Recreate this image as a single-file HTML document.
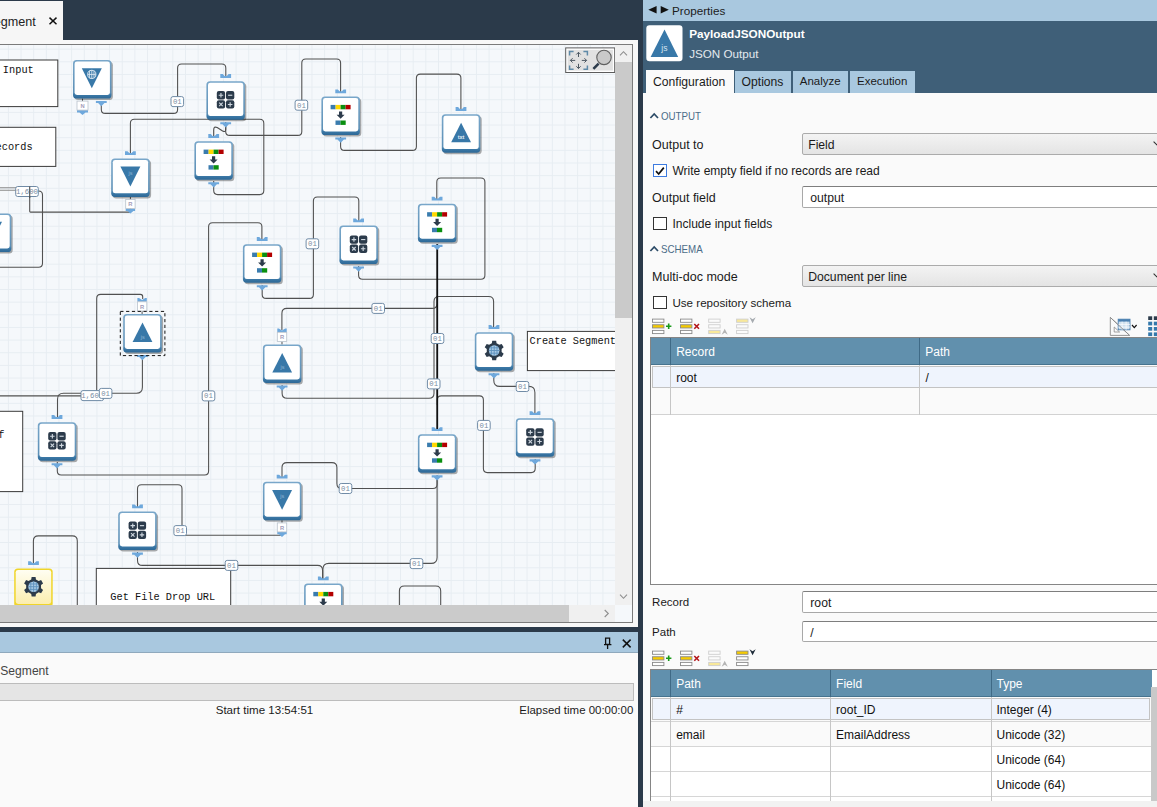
<!DOCTYPE html>
<html><head><meta charset="utf-8"><title>Properties</title>
<style>
*{box-sizing:border-box}
html,body{margin:0;padding:0}
body{width:1157px;height:807px;overflow:hidden;position:relative;background:#fafafa;font-family:"Liberation Sans",sans-serif;font-size:12px;color:#1a1a1a}
.abs{position:absolute}
.t{position:absolute;white-space:pre;line-height:1}
</style></head>
<body>
<!-- ===== left: top bar ===== -->
<div class="abs" style="left:0;top:0;width:643px;height:40px;background:#2b3a4a"></div>
<div class="abs" style="left:0;top:1px;width:63.2px;height:39px;background:#f6f6f6"></div>
<div class="t" style="left:-6.3px;top:15.8px;font-size:12.6px;color:#222">egment</div>
<svg class="abs" style="left:47px;top:15px" width="12" height="12" viewBox="0 0 12 12"><path d="M2.5,2.6 L9.5,9.2 M9.5,2.6 L2.5,9.2" stroke="#111" stroke-width="1.45" fill="none"/></svg>
<!-- light frame around canvas -->
<div class="abs" style="left:0;top:40px;width:637.5px;height:587.3px;background:#f8f8f8"></div>
<div class="abs" style="left:-1px;top:43.7px;width:634.1px;height:579px;border:1px solid #7b7b7b;background:#f5f8fb"></div>
<svg width="615.3" height="560" viewBox="0 45 615.3 560" style="position:absolute;left:0;top:45px;display:block">

<defs>
<pattern id="grid" x="7.9" y="10.7" width="12.65" height="12.65" patternUnits="userSpaceOnUse">
  <path d="M0.5,0 V12.65 M0,0.5 H12.65" stroke="#e7edf2" stroke-width="1" fill="none"/>
</pattern>
<linearGradient id="tb" x1="0" y1="0" x2="0" y2="1">
  <stop offset="0" stop-color="#79a7ca"/><stop offset="0.85" stop-color="#5b8fb6"/><stop offset="0.9" stop-color="#3d7aa8"/><stop offset="1" stop-color="#2d6896"/>
</linearGradient>
<linearGradient id="ty" x1="0" y1="0" x2="0" y2="1">
  <stop offset="0" stop-color="#fffef2"/><stop offset="1" stop-color="#fbeeb0"/>
</linearGradient>
<g id="tile">
  <rect x="1.6" y="1.8" width="38.3" height="38.2" rx="3.5" fill="#000" opacity="0.32"/>
  <rect x="0" y="0" width="38.5" height="38.5" rx="3.6" fill="url(#tb)"/>
  <rect x="1.6" y="1.5" width="35.3" height="33.4" rx="2.4" fill="#fff"/>
</g>
<g id="tileY">
  <rect x="0" y="0" width="38.5" height="38.5" rx="3.6" fill="#f0d52a"/>
  <rect x="1.5" y="1.5" width="35.5" height="34" rx="2.4" fill="url(#ty)"/>
</g>
<g id="icCalc">
  <g fill="#2c3b4b">
    <rect x="10.4" y="9.9" width="8.3" height="8.3" rx="2"/><rect x="19.6" y="9.9" width="8.3" height="8.3" rx="2"/>
    <rect x="10.4" y="19.1" width="8.3" height="8.3" rx="2"/><rect x="19.6" y="19.1" width="8.3" height="8.3" rx="2"/>
  </g>
  <g stroke="#cfd7df" stroke-width="1.15" fill="none">
    <path d="M12.3,14.05 H16.8 M14.55,11.8 V16.3"/>
    <path d="M21.7,14.05 H25.9"/>
    <path d="M12.8,21.5 L16.3,25 M16.3,21.5 L12.8,25"/>
    <path d="M21.5,23.25 H26 M23.75,21 V25.5"/>
  </g>
</g>
<g id="icBars">
  <rect x="9.2" y="8.4" width="5" height="4.4" fill="#3a7cae"/><rect x="14.2" y="8.4" width="5" height="4.4" fill="#ffd800"/>
  <rect x="19.2" y="8.4" width="5" height="4.4" fill="#0a8f10"/><rect x="24.2" y="8.4" width="5" height="4.4" fill="#b30000"/>
  <path d="M17.6,15 H20.8 V18.3 H23.2 L19.2,22.2 L15.2,18.3 H17.6 Z" fill="#2c3b4b"/>
  <rect x="14.1" y="24" width="5" height="4.4" fill="#3a7cae"/><rect x="19.1" y="24" width="5.2" height="4.4" fill="#0a8f10"/>
</g>
<g id="icJsUp">
  <path d="M19.3,8.5 L29.2,28 H9.4 Z" fill="#3878a8"/>
</g>
<g id="icTxtUp">
  <path d="M19.3,8.5 L29.2,28 H9.4 Z" fill="#3878a8"/>
</g>
<g id="icJsDown">
  <path d="M9.2,8.2 H29.2 L19.2,28 Z" fill="#3878a8"/>
</g>
<g id="icGlobeDown">
  <path d="M8.8,8.2 H28.8 L18.8,28.2 Z" fill="#3878a8"/>
  <circle cx="18.8" cy="14.4" r="4.1" fill="#3878a8" stroke="#dbe8f2" stroke-width="1"/>
  <path d="M18.8,10.3 V18.5 M14.7,14.4 H22.9 M16.6,10.9 V17.9 M21,10.9 V17.9" stroke="#dbe8f2" stroke-width="0.9" fill="none"/>
</g>
<g id="icGear">
  <path id="gearp" fill="#2c3b4b" d="M17.05,11.07 L17.42,8.50 L21.38,8.50 L21.75,11.07 L24.49,12.65 L26.90,11.69 L28.88,15.11 L26.83,16.72 L26.83,19.88 L28.88,21.49 L26.90,24.91 L24.49,23.95 L21.75,25.53 L21.38,28.10 L17.42,28.10 L17.05,25.53 L14.31,23.95 L11.90,24.91 L9.92,21.49 L11.97,19.88 L11.97,16.72 L9.92,15.11 L11.90,11.69 L14.31,12.65 Z"/>
  <circle cx="19.4" cy="18.3" r="5.3" fill="#a9cbe6"/>
  <path d="M19.4,13 V23.6 M14.1,18.3 H24.7 M16.6,13.8 V22.8 M22.2,13.8 V22.8 M14.8,15.6 H24 M14.8,21 H24" stroke="#5d92bd" stroke-width="0.9" fill="none"/>
</g>
</defs>

<rect x="0" y="45" width="615.3" height="560" fill="#f5f8fb"/>
<rect x="0" y="45" width="615.3" height="560" fill="url(#grid)"/>
<path d="M-5,187.7 H20 M-5,190.3 H20" stroke="#8a8a8a" stroke-width="1.1" fill="none"/><path d="M29.7,190.0 L29.7,211.3 Q29.7,212.1 30.5,212.1 L129.6,212.1 Q130.4,212.1 130.4,211.3 L130.4,208.0" fill="none" stroke="#515151" stroke-width="1.08"/><path d="M30.0,191.0 L38.5,191.0 Q42.5,191.0 42.5,195.0 L42.5,263.3 Q42.5,267.3 38.5,267.3 L-5.0,267.3" fill="none" stroke="#515151" stroke-width="1.08"/><path d="M101.3,102.0 L101.3,109.4 Q101.3,113.4 105.3,113.4 L173.6,113.4 Q177.6,113.4 177.6,109.4 L177.6,68.0 Q177.6,64.0 181.6,64.0 L221.8,64.0 Q225.8,64.0 225.8,68.0 L225.8,78.0" fill="none" stroke="#515151" stroke-width="1.08"/><path d="M225.7,122.0 L225.7,131.4 Q225.7,135.4 229.7,135.4 L297.8,135.4 Q301.8,135.4 301.8,131.4 L301.8,63.0 Q301.8,59.0 305.8,59.0 L336.6,59.0 Q340.6,59.0 340.6,63.0 L340.6,92.0" fill="none" stroke="#515151" stroke-width="1.08"/><path d="M225.7,124 V129.5 Q225.7,132.6 222.6,131 L217.2,127.6 Q213.7,125.8 213.7,130 V138" fill="none" stroke="#4f4f4f" stroke-width="1.15"/><path d="M213.7,181.0 L213.7,190.6 Q213.7,194.6 217.7,194.6 L259.8,194.6 Q263.8,194.6 263.8,190.6 L263.8,123.2 Q263.8,119.2 259.8,119.2 L134.4,119.2 Q130.4,119.2 130.4,123.2 L130.4,155.0" fill="none" stroke="#515151" stroke-width="1.08"/><path d="M340.6,137.0 L340.6,146.4 Q340.6,150.4 344.6,150.4 L412.4,150.4 Q416.4,150.4 416.4,146.4 L416.4,78.1 Q416.4,74.1 420.4,74.1 L456.9,74.1 Q460.9,74.1 460.9,78.1 L460.9,110.0" fill="none" stroke="#515151" stroke-width="1.08"/><path d="M57.3,462.0 L57.3,471.0 Q57.3,475.0 61.3,475.0 L204.6,475.0 Q208.6,475.0 208.6,471.0 L208.6,226.8 Q208.6,222.8 212.6,222.8 L257.9,222.8 Q261.9,222.8 261.9,226.8 L261.9,240.0" fill="none" stroke="#515151" stroke-width="1.08"/><path d="M262.2,285.0 L262.2,294.4 Q262.2,298.4 266.2,298.4 L309.4,298.4 Q313.4,298.4 313.4,294.4 L313.4,201.0 Q313.4,197.0 317.4,197.0 L354.8,197.0 Q358.8,197.0 358.8,201.0 L358.8,222.0" fill="none" stroke="#515151" stroke-width="1.08"/><path d="M358.6,266.0 L358.6,275.3 Q358.6,279.3 362.6,279.3 L480.9,279.3 Q484.9,279.3 484.9,275.3 L484.9,182.0 Q484.9,178.0 480.9,178.0 L440.8,178.0 Q436.8,178.0 436.8,182.0 L436.8,200.0" fill="none" stroke="#515151" stroke-width="1.08"/><path d="M282.1,385.0 L282.1,393.3 Q282.1,398.3 287.1,398.3 L429.0,398.3 Q434.0,398.3 434.0,393.3 L434.0,301.5 Q434.0,296.5 439.0,296.5 L488.6,296.5 Q493.6,296.5 493.6,301.5 L493.6,328.0" fill="none" stroke="#515151" stroke-width="1.08"/><path d="M437.1,296.0 L437.1,303.4 Q437.1,308.4 432.1,308.4 L286.9,308.4 Q281.9,308.4 281.9,313.4 L281.9,330.0" fill="none" stroke="#515151" stroke-width="1.08"/><path d="M535.2,459.0 L535.2,468.6 Q535.2,472.6 531.2,472.6 L487.4,472.6 Q483.4,472.6 483.4,468.6 L483.4,399.9 Q483.4,395.9 479.4,395.9 L441.3,395.9 Q437.3,395.9 437.3,399.9 L437.3,405.0" fill="none" stroke="#515151" stroke-width="1.08"/><path d="M437.2,244 V430" stroke="#111" stroke-width="1.8" fill="none"/><path d="M493.8,373.0 L493.8,380.4 Q493.8,386.4 499.8,386.4 L528.9,386.4 Q534.9,386.4 534.9,392.4 L534.9,414.0" fill="none" stroke="#515151" stroke-width="1.08"/><path d="M142.7,299.0 L142.7,296.7 Q142.7,294.4 140.4,294.4 L100.7,294.4 Q96.7,294.4 96.7,298.4 L96.7,391.9 Q96.7,395.9 92.7,395.9 L-5.0,395.9" fill="none" stroke="#515151" stroke-width="1.08"/><path d="M142.4,355.0 L142.4,387.3 Q142.4,393.3 136.4,393.3 L63.5,393.3 Q57.5,393.3 57.5,399.3 L57.5,418.0" fill="none" stroke="#515151" stroke-width="1.08"/><path d="M137.5,508.0 L137.5,488.7 Q137.5,484.7 141.5,484.7 L178.0,484.7 Q182.0,484.7 182.0,488.7 L182.0,531.3 Q182.0,535.3 186.0,535.3 L279.9,535.3 Q282.0,535.3 282.0,533.1 L282.0,531.0" fill="none" stroke="#515151" stroke-width="1.08"/><path d="M137.5,552.0 L137.5,560.4 Q137.5,565.4 142.5,565.4 L317.6,565.4 Q322.6,565.4 322.6,570.4 L322.6,580.0" fill="none" stroke="#515151" stroke-width="1.08"/><path d="M437.1,475.0 L437.1,557.4 Q437.1,563.4 431.1,563.4 L328.9,563.4 Q322.9,563.4 322.9,569.4 L322.9,580.0" fill="none" stroke="#515151" stroke-width="1.08"/><path d="M437.1,480.0 L437.1,484.2 Q437.1,488.5 432.9,488.5 L341.9,488.5 Q336.9,488.5 336.9,483.5 L336.9,467.6 Q336.9,462.6 331.9,462.6 L287.0,462.6 Q282.0,462.6 282.0,467.6 L282.0,478.0" fill="none" stroke="#515151" stroke-width="1.08"/><path d="M33.4,565.0 L33.4,540.9 Q33.4,535.9 38.4,535.9 L72.3,535.9 Q77.3,535.9 77.3,540.9 L77.3,612.0" fill="none" stroke="#515151" stroke-width="1.08"/><path d="M399.4,612.0 L399.4,591.0 Q399.4,586.0 404.4,586.0 L435.7,586.0 Q440.7,586.0 440.7,591.0 L440.7,612.0" fill="none" stroke="#515151" stroke-width="1.08"/><rect x="-10" y="60" width="67.8" height="46.6" fill="#fff" stroke="#3a3a3a" stroke-width="1"/><text x="-3.3" y="72.8" font-family="Liberation Mono, monospace" font-size="10.3" fill="#111" xml:space="preserve"> Input</text><rect x="-10" y="127.3" width="65.8" height="39.1" fill="#fff" stroke="#3a3a3a" stroke-width="1"/><text x="-10.6" y="150.4" font-family="Liberation Mono, monospace" font-size="10.3" fill="#111" xml:space="preserve">records</text><rect x="-10" y="411.3" width="32.7" height="80.3" fill="#fff" stroke="#3a3a3a" stroke-width="1"/><text x="-1.7" y="437.6" font-family="Liberation Mono, monospace" font-size="10.3" fill="#111" xml:space="preserve">f</text><rect x="527.4" y="331.4" width="100" height="39.2" fill="#fff" stroke="#3a3a3a" stroke-width="1"/><text x="529.6" y="343.6" font-family="Liberation Mono, monospace" font-size="10.3" fill="#111" xml:space="preserve">Create Segment</text><rect x="96.3" y="568.4" width="134.4" height="60" fill="#fff" stroke="#3a3a3a" stroke-width="1"/><text x="110.3" y="600" font-family="Liberation Mono, monospace" font-size="10.3" fill="#111" xml:space="preserve">Get File Drop URL</text><path d="M95.9,101.0 H106.7 V103.1 H104.5 L101.3,106.2 L98.1,103.1 H95.9 Z" fill="#6ea8dc"/><path d="M220.3,74.1 L222.8,74.1 L224.6,75.9 L226.8,75.9 L228.6,74.1 L231.1,74.1 L231.1,77.9 L220.3,77.9 Z" fill="#6ea8dc"/><path d="M220.3,122.2 H231.1 V124.3 H228.9 L225.7,127.4 L222.5,124.3 H220.3 Z" fill="#6ea8dc"/><path d="M125.0,151.3 L127.5,151.3 L129.3,153.1 L131.5,153.1 L133.3,151.3 L135.8,151.3 L135.8,155.1 L125.0,155.1 Z" fill="#6ea8dc"/><path d="M208.3,134.1 L210.8,134.1 L212.6,135.9 L214.8,135.9 L216.6,134.1 L219.1,134.1 L219.1,137.9 L208.3,137.9 Z" fill="#6ea8dc"/><path d="M208.3,182.2 H219.1 V184.3 H216.9 L213.7,187.4 L210.5,184.3 H208.3 Z" fill="#6ea8dc"/><path d="M335.3,89.4 L337.8,89.4 L339.6,91.2 L341.8,91.2 L343.6,89.4 L346.1,89.4 L346.1,93.2 L335.3,93.2 Z" fill="#6ea8dc"/><path d="M335.3,137.5 H346.1 V139.6 H343.9 L340.7,142.7 L337.5,139.6 H335.3 Z" fill="#6ea8dc"/><path d="M455.6,107.1 L458.1,107.1 L459.9,108.9 L462.1,108.9 L463.9,107.1 L466.4,107.1 L466.4,110.9 L455.6,110.9 Z" fill="#6ea8dc"/><path d="M256.8,237.1 L259.3,237.1 L261.1,238.9 L263.3,238.9 L265.1,237.1 L267.6,237.1 L267.6,240.9 L256.8,240.9 Z" fill="#6ea8dc"/><path d="M256.8,285.2 H267.6 V287.3 H265.4 L262.2,290.4 L259.0,287.3 H256.8 Z" fill="#6ea8dc"/><path d="M353.2,218.4 L355.7,218.4 L357.5,220.2 L359.7,220.2 L361.5,218.4 L364.0,218.4 L364.0,222.2 L353.2,222.2 Z" fill="#6ea8dc"/><path d="M353.2,266.5 H364.0 V268.6 H361.8 L358.6,271.7 L355.4,268.6 H353.2 Z" fill="#6ea8dc"/><path d="M431.7,196.7 L434.2,196.7 L436.0,198.5 L438.2,198.5 L440.0,196.7 L442.5,196.7 L442.5,200.5 L431.7,200.5 Z" fill="#6ea8dc"/><path d="M431.7,244.8 H442.5 V246.9 H440.3 L437.1,250.0 L433.9,246.9 H431.7 Z" fill="#6ea8dc"/><path d="M137.0,355.0 H147.8 V357.1 H145.6 L142.4,360.2 L139.2,357.1 H137.0 Z" fill="#6ea8dc"/><path d="M276.7,385.5 H287.5 V387.6 H285.3 L282.1,390.7 L278.9,387.6 H276.7 Z" fill="#6ea8dc"/><path d="M488.6,325.1 L491.1,325.1 L492.9,326.9 L495.1,326.9 L496.9,325.1 L499.4,325.1 L499.4,328.9 L488.6,328.9 Z" fill="#6ea8dc"/><path d="M488.6,373.2 H499.4 V375.3 H497.2 L494.0,378.4 L490.8,375.3 H488.6 Z" fill="#6ea8dc"/><path d="M51.6,415.1 L54.1,415.1 L55.9,416.9 L58.1,416.9 L59.9,415.1 L62.4,415.1 L62.4,418.9 L51.6,418.9 Z" fill="#6ea8dc"/><path d="M51.6,463.2 H62.4 V465.3 H60.2 L57.0,468.4 L53.8,465.3 H51.6 Z" fill="#6ea8dc"/><path d="M529.6,411.2 L532.1,411.2 L533.9,413.0 L536.1,413.0 L537.9,411.2 L540.4,411.2 L540.4,415.0 L529.6,415.0 Z" fill="#6ea8dc"/><path d="M529.6,459.3 H540.4 V461.4 H538.2 L535.0,464.5 L531.8,461.4 H529.6 Z" fill="#6ea8dc"/><path d="M431.7,427.2 L434.2,427.2 L436.0,429.0 L438.2,429.0 L440.0,427.2 L442.5,427.2 L442.5,431.0 L431.7,431.0 Z" fill="#6ea8dc"/><path d="M431.7,475.3 H442.5 V477.4 H440.3 L437.1,480.5 L433.9,477.4 H431.7 Z" fill="#6ea8dc"/><path d="M276.7,474.7 L279.2,474.7 L281.0,476.5 L283.2,476.5 L285.0,474.7 L287.5,474.7 L287.5,478.5 L276.7,478.5 Z" fill="#6ea8dc"/><path d="M132.1,504.5 L134.6,504.5 L136.4,506.3 L138.6,506.3 L140.4,504.5 L142.9,504.5 L142.9,508.3 L132.1,508.3 Z" fill="#6ea8dc"/><path d="M132.1,552.6 H142.9 V554.7 H140.7 L137.5,557.8 L134.3,554.7 H132.1 Z" fill="#6ea8dc"/><path d="M317.9,576.4 L320.4,576.4 L322.2,578.2 L324.4,578.2 L326.2,576.4 L328.7,576.4 L328.7,580.2 L317.9,580.2 Z" fill="#6ea8dc"/><line x1="82.5" y1="98.5" x2="82.5" y2="101.1" stroke="#555" stroke-width="1"/><path d="M77.0,110.1 H88.0 V112.5 H85.5 L82.5,115.1 L79.5,112.5 H77.0 Z" fill="#6ea8dc"/><rect x="77.0" y="101.1" width="11.0" height="9.0" fill="#fff" stroke="#b9c2cc" stroke-width="0.8"/><text x="82.5" y="107.8" text-anchor="middle" font-family="Liberation Sans, sans-serif" font-size="5.8" font-weight="bold" fill="#a39dba">N</text><line x1="130.4" y1="196.9" x2="130.4" y2="199.5" stroke="#555" stroke-width="1"/><path d="M125.7,208.5 H135.1 V210.9 H133.4 L130.4,213.5 L127.4,210.9 H125.7 Z" fill="#6ea8dc"/><rect x="125.7" y="199.5" width="9.4" height="9.0" fill="#fff" stroke="#b9c2cc" stroke-width="0.8"/><text x="130.4" y="206.2" text-anchor="middle" font-family="Liberation Sans, sans-serif" font-size="5.8" font-weight="bold" fill="#a39dba">R</text><line x1="142.1" y1="311.0" x2="142.1" y2="314.0" stroke="#555" stroke-width="1"/><path d="M137.4,297.9 L139.0,297.9 L142.1,300.1 L145.2,297.9 L146.8,297.9 L146.8,301.8 L137.4,301.8 Z" fill="#6ea8dc"/><rect x="137.4" y="301.8" width="9.4" height="9.2" fill="#fff" stroke="#b9c2cc" stroke-width="0.8"/><text x="142.1" y="308.7" text-anchor="middle" font-family="Liberation Sans, sans-serif" font-size="5.8" font-weight="bold" fill="#a39dba">R</text><line x1="282.0" y1="341.5" x2="282.0" y2="344.5" stroke="#555" stroke-width="1"/><path d="M277.3,328.4 L278.9,328.4 L282.0,330.6 L285.1,328.4 L286.7,328.4 L286.7,332.3 L277.3,332.3 Z" fill="#6ea8dc"/><rect x="277.3" y="332.3" width="9.4" height="9.2" fill="#fff" stroke="#b9c2cc" stroke-width="0.8"/><text x="282.0" y="339.2" text-anchor="middle" font-family="Liberation Sans, sans-serif" font-size="5.8" font-weight="bold" fill="#a39dba">R</text><line x1="282.0" y1="520.3" x2="282.0" y2="522.9" stroke="#555" stroke-width="1"/><path d="M277.3,531.9 H286.7 V534.3 H285.0 L282.0,536.9 L279.0,534.3 H277.3 Z" fill="#6ea8dc"/><rect x="277.3" y="522.9" width="9.4" height="9.0" fill="#fff" stroke="#b9c2cc" stroke-width="0.8"/><text x="282.0" y="529.6" text-anchor="middle" font-family="Liberation Sans, sans-serif" font-size="5.8" font-weight="bold" fill="#a39dba">R</text><rect x="120.3" y="311.4" width="44.6" height="44.2" fill="none" stroke="#111" stroke-width="1" stroke-dasharray="3.2 2.6"/><use href="#tile" x="73.0" y="60.0"/><use href="#icGlobeDown" x="73.0" y="60.0"/><use href="#tile" x="206.4" y="81.2"/><use href="#icCalc" x="206.4" y="81.2"/><use href="#tile" x="111.2" y="158.4"/><use href="#icJsDown" x="111.2" y="158.4"/><text x="130.6" y="175.0" text-anchor="middle" font-family="Liberation Sans, sans-serif" font-size="5.5" fill="#8fb6d6">js</text><use href="#tile" x="194.4" y="141.2"/><use href="#icBars" x="194.4" y="141.2"/><use href="#tile" x="321.4" y="96.5"/><use href="#icBars" x="321.4" y="96.5"/><use href="#tile" x="441.8" y="114.2"/><use href="#icTxtUp" x="441.8" y="114.2"/><text x="461.1" y="138.8" text-anchor="middle" font-family="Liberation Sans, sans-serif" font-size="5.5" font-weight="bold" fill="#e4eef6">txt</text><use href="#tile" x="-27.2" y="213.5"/><use href="#icJsDown" x="-27.2" y="213.5"/><text x="-7.9" y="230.1" text-anchor="middle" font-family="Liberation Sans, sans-serif" font-size="5.5" fill="#8fb6d6">js</text><use href="#tile" x="242.9" y="244.2"/><use href="#icBars" x="242.9" y="244.2"/><use href="#tile" x="339.4" y="225.5"/><use href="#icCalc" x="339.4" y="225.5"/><use href="#tile" x="417.9" y="203.8"/><use href="#icBars" x="417.9" y="203.8"/><use href="#tile" x="123.2" y="314.0"/><use href="#icJsUp" x="123.2" y="314.0"/><text x="142.8" y="339.0" text-anchor="middle" font-family="Liberation Sans, sans-serif" font-size="5.5" fill="#8fb6d6">js</text><use href="#tile" x="262.9" y="344.5"/><use href="#icJsUp" x="262.9" y="344.5"/><text x="282.5" y="369.5" text-anchor="middle" font-family="Liberation Sans, sans-serif" font-size="5.5" fill="#8fb6d6">js</text><use href="#tile" x="474.8" y="332.2"/><use href="#icGear" x="474.8" y="332.2"/><use href="#tile" x="37.8" y="422.2"/><use href="#icCalc" x="37.8" y="422.2"/><use href="#tile" x="515.8" y="418.3"/><use href="#icCalc" x="515.8" y="418.3"/><use href="#tile" x="417.9" y="434.3"/><use href="#icBars" x="417.9" y="434.3"/><use href="#tile" x="262.9" y="481.8"/><use href="#icJsDown" x="262.9" y="481.8"/><text x="282.2" y="498.4" text-anchor="middle" font-family="Liberation Sans, sans-serif" font-size="5.5" fill="#8fb6d6">js</text><use href="#tile" x="118.2" y="511.6"/><use href="#icCalc" x="118.2" y="511.6"/><use href="#tile" x="304.1" y="583.5"/><use href="#icBars" x="304.1" y="583.5"/><path d="M28.1,561.3 L30.6,561.3 L32.4,563.1 L34.6,563.1 L36.4,561.3 L38.9,561.3 L38.9,565.1 L28.1,565.1 Z" fill="#6ea8dc"/><use href="#tileY" x="14.2" y="568.4"/><use href="#icGear" x="14.2" y="568.4"/><rect x="171.0" y="96.6" width="12.6" height="10" rx="2" fill="#fff" stroke="#6f8ba6" stroke-width="1"/><text x="177.3" y="104.2" text-anchor="middle" font-family="Liberation Mono, monospace" font-size="7.3" fill="#7a8da3">01</text><rect x="295.1" y="100.2" width="12.6" height="10" rx="2" fill="#fff" stroke="#6f8ba6" stroke-width="1"/><text x="301.4" y="107.8" text-anchor="middle" font-family="Liberation Mono, monospace" font-size="7.3" fill="#7a8da3">01</text><rect x="306.1" y="238.8" width="12.6" height="10" rx="2" fill="#fff" stroke="#6f8ba6" stroke-width="1"/><text x="312.4" y="246.4" text-anchor="middle" font-family="Liberation Mono, monospace" font-size="7.3" fill="#7a8da3">01</text><rect x="371.9" y="303.4" width="12.6" height="10" rx="2" fill="#fff" stroke="#6f8ba6" stroke-width="1"/><text x="378.2" y="311.0" text-anchor="middle" font-family="Liberation Mono, monospace" font-size="7.3" fill="#7a8da3">01</text><rect x="431.2" y="333.5" width="12.6" height="10" rx="2" fill="#fff" stroke="#6f8ba6" stroke-width="1"/><text x="437.5" y="341.1" text-anchor="middle" font-family="Liberation Mono, monospace" font-size="7.3" fill="#7a8da3">01</text><rect x="427.4" y="378.9" width="12.6" height="10" rx="2" fill="#fff" stroke="#6f8ba6" stroke-width="1"/><text x="433.7" y="386.5" text-anchor="middle" font-family="Liberation Mono, monospace" font-size="7.3" fill="#7a8da3">01</text><rect x="516.2" y="381.5" width="12.6" height="10" rx="2" fill="#fff" stroke="#6f8ba6" stroke-width="1"/><text x="522.5" y="389.1" text-anchor="middle" font-family="Liberation Mono, monospace" font-size="7.3" fill="#7a8da3">01</text><rect x="477.6" y="420.4" width="12.6" height="10" rx="2" fill="#fff" stroke="#6f8ba6" stroke-width="1"/><text x="483.9" y="428.0" text-anchor="middle" font-family="Liberation Mono, monospace" font-size="7.3" fill="#7a8da3">01</text><rect x="202.2" y="390.9" width="12.6" height="10" rx="2" fill="#fff" stroke="#6f8ba6" stroke-width="1"/><text x="208.5" y="398.5" text-anchor="middle" font-family="Liberation Mono, monospace" font-size="7.3" fill="#7a8da3">01</text><rect x="173.9" y="525.6" width="12.6" height="10" rx="2" fill="#fff" stroke="#6f8ba6" stroke-width="1"/><text x="180.2" y="533.2" text-anchor="middle" font-family="Liberation Mono, monospace" font-size="7.3" fill="#7a8da3">01</text><rect x="225.2" y="560.4" width="12.6" height="10" rx="2" fill="#fff" stroke="#6f8ba6" stroke-width="1"/><text x="231.5" y="568.0" text-anchor="middle" font-family="Liberation Mono, monospace" font-size="7.3" fill="#7a8da3">01</text><rect x="339.2" y="483.5" width="12.6" height="10" rx="2" fill="#fff" stroke="#6f8ba6" stroke-width="1"/><text x="345.5" y="491.1" text-anchor="middle" font-family="Liberation Mono, monospace" font-size="7.3" fill="#7a8da3">01</text><rect x="410.2" y="558.6" width="12.6" height="10" rx="2" fill="#fff" stroke="#6f8ba6" stroke-width="1"/><text x="416.5" y="566.2" text-anchor="middle" font-family="Liberation Mono, monospace" font-size="7.3" fill="#7a8da3">01</text><rect x="15.7" y="186.5" width="22.6" height="10" rx="2" fill="#fff" stroke="#6f8ba6" stroke-width="1"/><text x="27.0" y="194.1" text-anchor="middle" font-family="Liberation Mono, monospace" font-size="7.3" fill="#7a8da3">1,600</text><rect x="81.0" y="390.6" width="22.6" height="10" rx="2" fill="#fff" stroke="#6f8ba6" stroke-width="1"/><text x="92.3" y="398.2" text-anchor="middle" font-family="Liberation Mono, monospace" font-size="7.3" fill="#7a8da3">1,600</text><rect x="99.3" y="388.4" width="12.6" height="10" rx="2" fill="#fff" stroke="#6f8ba6" stroke-width="1"/><text x="105.6" y="396.0" text-anchor="middle" font-family="Liberation Mono, monospace" font-size="7.3" fill="#7a8da3">01</text><path d="M29.7,186.6 V198" stroke="#4f4f4f" stroke-width="1.15" fill="none"/>
<!-- fit / zoom toolbox -->
<rect x="565.7" y="47.9" width="49" height="24.6" fill="#fff" stroke="#5c5c5c" stroke-width="1"/>
<rect x="567.6" y="49.8" width="45.3" height="20.8" fill="#e1e1e1"/>
<g fill="none" stroke="#5f8aa8" stroke-width="1.5">
  <path d="M569.6,55.4 V51.5 H573.6 M583.4,51.5 H587.4 V55.4 M587.4,65.4 V69.3 H583.4 M573.6,69.3 H569.6 V65.4"/>
</g>
<g fill="none" stroke="#4a5560" stroke-width="1">
  <path d="M578.5,57 V52.3 M576.3,54.5 L578.5,52.3 L580.7,54.5"/>
  <path d="M578.5,63.8 V68.5 M576.3,66.3 L578.5,68.5 L580.7,66.3"/>
  <path d="M575.2,60.4 H570.4 M572.6,58.2 L570.4,60.4 L572.6,62.6"/>
  <path d="M581.8,60.4 H586.6 M584.4,58.2 L586.6,60.4 L584.4,62.6"/>
</g>
<circle cx="604" cy="57.4" r="7.2" fill="#c9c9c9" stroke="#5f5f5f" stroke-width="1.1"/>
<path d="M598.6,63.6 L593.4,68.8" stroke="#2c3b4b" stroke-width="2.6" fill="none"/>
</svg>
<!-- vertical scrollbar -->
<div class="abs" style="left:615.3px;top:44.7px;width:16.9px;height:560.3px;background:#f0f0f0"></div>
<div class="abs" style="left:615.3px;top:61.8px;width:16.9px;height:256.2px;background:#cacaca"></div>
<svg class="abs" style="left:615.3px;top:44.7px" width="17" height="17" viewBox="0 0 17 17"><path d="M5,10.3 L8.5,6.7 L12,10.3" stroke="#8e8e8e" stroke-width="1.1" fill="none"/></svg>
<svg class="abs" style="left:615.3px;top:588px" width="17" height="17" viewBox="0 0 17 17"><path d="M5,6.7 L8.5,10.3 L12,6.7" stroke="#8e8e8e" stroke-width="1.1" fill="none"/></svg>
<!-- horizontal scrollbar -->
<div class="abs" style="left:0;top:605px;width:615.3px;height:17px;background:#f0f0f0"></div>
<div class="abs" style="left:0;top:605px;width:569.2px;height:17px;background:#cbcbcb"></div>
<svg class="abs" style="left:598px;top:605px" width="17" height="17" viewBox="0 0 17 17"><path d="M6.7,5 L10.3,8.5 L6.7,12" stroke="#8e8e8e" stroke-width="1.1" fill="none"/></svg>
<div class="abs" style="left:615.3px;top:605px;width:16.9px;height:17px;background:#f5f8fb"></div>
<!-- splitters -->
<div class="abs" style="left:0;top:627.3px;width:643px;height:5px;background:#2b3a4a"></div>
<div class="abs" style="left:637.5px;top:0;width:5.3px;height:807px;background:#2b3a4a"></div>
<!-- ===== bottom-left panel ===== -->
<div class="abs" style="left:0;top:632.3px;width:637.5px;height:21px;background:#a9c8df;border-bottom:1px solid #8fa9bd"></div>
<div class="abs" style="left:0;top:653.3px;width:637.5px;height:153.7px;background:#fafafa"></div>
<svg class="abs" style="left:601px;top:637px" width="34" height="14" viewBox="0 0 34 14">
  <path d="M4.6,1.2 H8.6 V7.4 H4.6 Z M3,7.6 H10.4 M6.6,7.6 V12" stroke="#111" stroke-width="1.3" fill="none"/>
  <path d="M21.8,2.6 L29.6,10.4 M29.6,2.6 L21.8,10.4" stroke="#111" stroke-width="1.5" fill="none"/>
</svg>
<div class="t" style="left:0.3px;top:665.3px;font-size:12.1px;color:#444">Segment</div>
<div class="abs" style="left:-1px;top:683px;width:635px;height:17.5px;background:#e5e5e5;border:1px solid #bcbcbc"></div>
<div class="t" style="left:215.7px;top:704.6px;font-size:11.55px;color:#1a1a1a">Start time 13:54:51</div>
<div class="t" style="left:519.3px;top:704.6px;font-size:11.46px;color:#1a1a1a">Elapsed time 00:00:00</div>
<div class="abs" style="left:642.8px;top:0;width:514.2px;height:807px;background:#fafafa"></div>
<div class="abs" style="left:642.8px;top:0;width:514.2px;height:20.6px;background:#a9c8df"></div>
<div class="abs" style="left:642.8px;top:20.6px;width:514.2px;height:72.2px;background:#3f5f78"></div>
<svg class="abs" style="left:646px;top:4px" width="26" height="12" viewBox="0 0 26 12"><path d="M2.3,5.7 L10.6,1.9 V9.5 Z M22.8,5.7 L14.7,1.9 V9.5 Z" fill="#111"/></svg>
<div class="t" style="left:672px;top:4.6px;font-size:11.7px;color:#1c1c1c">Properties</div>
<svg class="abs" style="left:646.4px;top:24.6px" width="37" height="37" viewBox="0 0 37 37"><rect x="0.3" y="0.3" width="36.2" height="35.9" rx="3.2" fill="#fff"/><path d="M18.5,4.6 L32.2,32 H4.6 Z" fill="#3878a8"/><text x="18.4" y="25.6" text-anchor="middle" font-family="Liberation Sans, sans-serif" font-size="8.6" fill="#d6e4ef">js</text></svg>
<div class="t" style="left:689.2px;top:27.8px;font-size:11.74px;font-weight:700;color:#fff">PayloadJSONOutput</div>
<div class="t" style="left:689.2px;top:47.6px;font-size:11.65px;color:#e3e9ee">JSON Output</div>
<div class="abs" style="left:646px;top:69.9px;width:87.6px;height:23px;background:#fafafa"></div>
<div class="t" style="left:653px;top:75.6px;font-size:12.15px;color:#1a1a1a">Configuration</div>
<div class="abs" style="left:734.9px;top:71.4px;width:56.4px;height:21.4px;background:#a9c8df"></div>
<div class="t" style="left:741.6px;top:75.8px;font-size:12.13px;color:#1a1a1a">Options</div>
<div class="abs" style="left:792.7px;top:71.4px;width:55.6px;height:21.4px;background:#a9c8df"></div>
<div class="t" style="left:799.8px;top:75.8px;font-size:11.47px;color:#1a1a1a">Analyze</div>
<div class="abs" style="left:850.1px;top:71.4px;width:65.0px;height:21.4px;background:#a9c8df"></div>
<div class="t" style="left:857px;top:75.8px;font-size:11.48px;color:#1a1a1a">Execution</div>
<svg class="abs" style="left:649px;top:111.3px" width="11" height="10" viewBox="0 0 11 10"><path d="M1.4,7 L5.2,3 L9,7" stroke="#2b4a66" stroke-width="1.7" fill="none"/></svg>
<div class="t" style="left:661px;top:110.7px;font-size:10.9px;color:#4b6c88;transform:scaleX(0.895);transform-origin:0 0">OUTPUT</div>
<svg class="abs" style="left:649px;top:244.3px" width="11" height="10" viewBox="0 0 11 10"><path d="M1.4,7 L5.2,3 L9,7" stroke="#2b4a66" stroke-width="1.7" fill="none"/></svg>
<div class="t" style="left:661px;top:243.70000000000002px;font-size:10.9px;color:#4b6c88;transform:scaleX(0.895);transform-origin:0 0">SCHEMA</div>
<div class="t" style="left:652.1px;top:139.0px;font-size:12.5px;color:#1a1a1a">Output to</div>
<div class="t" style="left:672.4px;top:165.0px;font-size:12.05px;color:#1a1a1a">Write empty field if no records are read</div>
<div class="t" style="left:652.1px;top:191.7px;font-size:12.44px;color:#1a1a1a">Output field</div>
<div class="t" style="left:672.4px;top:218.2px;font-size:12.07px;color:#1a1a1a">Include input fields</div>
<div class="t" style="left:652.1px;top:270.7px;font-size:12.54px;color:#1a1a1a">Multi-doc mode</div>
<div class="t" style="left:672.4px;top:297.3px;font-size:11.61px;color:#1a1a1a">Use repository schema</div>
<div class="t" style="left:652.1px;top:597.4px;font-size:11.5px;color:#1a1a1a">Record</div>
<div class="t" style="left:652.1px;top:626.7px;font-size:11.5px;color:#1a1a1a">Path</div>
<div class="abs" style="left:802.3px;top:133.2px;width:370px;height:21.7px;border:1px solid #ababab;border-radius:2px;background:linear-gradient(#f3f3f3,#e4e4e4)"></div>
<div class="t" style="left:808.2px;top:139.1px;font-size:12.2px;color:#1a1a1a">Field</div>
<svg class="abs" style="left:1150px;top:139.2px" width="8" height="8" viewBox="0 0 8 8"><path d="M3.6,2.6 L6.8,5.8 L10,2.6" stroke="#333" stroke-width="1.1" fill="none"/></svg>
<div class="abs" style="left:802.3px;top:264.9px;width:370px;height:21.7px;border:1px solid #ababab;border-radius:2px;background:linear-gradient(#f3f3f3,#e4e4e4)"></div>
<div class="t" style="left:808.2px;top:270.79999999999995px;font-size:12.2px;color:#1a1a1a">Document per line</div>
<svg class="abs" style="left:1150px;top:270.9px" width="8" height="8" viewBox="0 0 8 8"><path d="M3.6,2.6 L6.8,5.8 L10,2.6" stroke="#333" stroke-width="1.1" fill="none"/></svg>
<div class="abs" style="left:802.3px;top:186.0px;width:370px;height:21.9px;border:1px solid #a8a8a8;border-top-color:#7e7e7e;border-radius:2px;background:#fff"></div>
<div class="t" style="left:810.3px;top:192.1px;font-size:12.2px;color:#1a1a1a">output</div>
<div class="abs" style="left:802.3px;top:591.0px;width:370px;height:21.9px;border:1px solid #a8a8a8;border-top-color:#7e7e7e;border-radius:2px;background:#fff"></div>
<div class="t" style="left:810.3px;top:597.1px;font-size:12.2px;color:#1a1a1a">root</div>
<div class="abs" style="left:802.3px;top:620.9px;width:370px;height:20.8px;border:1px solid #a8a8a8;border-top-color:#7e7e7e;border-radius:2px;background:#fff"></div>
<div class="t" style="left:810.3px;top:627.0px;font-size:12.2px;color:#1a1a1a">/</div>
<div class="abs" style="left:653.2px;top:164px;width:13.4px;height:13.4px;border:1px solid #3d7be0;background:#fff"></div>
<svg class="abs" style="left:653.2px;top:164px" width="14" height="14" viewBox="0 0 14 14"><path d="M3,7.2 L5.7,10 L10.8,3.6" stroke="#111" stroke-width="1.7" fill="none"/></svg>
<div class="abs" style="left:653.2px;top:217.3px;width:13.4px;height:13.1px;border:1px solid #333;background:#fff"></div>
<div class="abs" style="left:653.2px;top:296.4px;width:13.4px;height:13.1px;border:1px solid #333;background:#fff"></div>
<svg class="abs" style="left:0;top:0" width="1157" height="807" viewBox="0 0 1157 807"><g transform="translate(652,318.6)"><rect x="0.5" y="0.50" width="11.4" height="3.2" fill="#fff" stroke="#8a8a8a" stroke-width="0.9"/><rect x="0.5" y="6.15" width="11.4" height="3.2" fill="#f6cb00" stroke="#8a8a8a" stroke-width="0.9"/><rect x="0.5" y="11.80" width="11.4" height="3.2" fill="#fff" stroke="#8a8a8a" stroke-width="0.9"/><path d="M14,7.7 H19.4 M16.7,5 V10.4" stroke="#1a9a1a" stroke-width="1.6" fill="none"/></g><g transform="translate(680,318.6)"><rect x="0.5" y="0.50" width="11.4" height="3.2" fill="#fff" stroke="#8a8a8a" stroke-width="0.9"/><rect x="0.5" y="6.15" width="11.4" height="3.2" fill="#f6cb00" stroke="#8a8a8a" stroke-width="0.9"/><rect x="0.5" y="11.80" width="11.4" height="3.2" fill="#fff" stroke="#8a8a8a" stroke-width="0.9"/><path d="M14.3,5.4 L19,10.1 M19,5.4 L14.3,10.1" stroke="#b4161b" stroke-width="1.6" fill="none"/></g><g transform="translate(708.2,318.6)" opacity="0.38"><rect x="0.5" y="0.50" width="11.4" height="3.2" fill="#fff" stroke="#8a8a8a" stroke-width="0.9"/><rect x="0.5" y="6.15" width="11.4" height="3.2" fill="#fff" stroke="#8a8a8a" stroke-width="0.9"/><rect x="0.5" y="11.80" width="11.4" height="3.2" fill="#f6cb00" stroke="#8a8a8a" stroke-width="0.9"/><path d="M13.4,16.2 L16.5,10.2 L19.6,16.2 L16.5,14.2 Z" fill="#444"/></g><g transform="translate(736.1,318.6)" opacity="0.38"><rect x="0.5" y="0.50" width="11.4" height="3.2" fill="#f6cb00" stroke="#8a8a8a" stroke-width="0.9"/><rect x="0.5" y="6.15" width="11.4" height="3.2" fill="#fff" stroke="#8a8a8a" stroke-width="0.9"/><rect x="0.5" y="11.80" width="11.4" height="3.2" fill="#fff" stroke="#8a8a8a" stroke-width="0.9"/><path d="M13.4,-1.4 L16.5,4.6 L19.6,-1.4 L16.5,0.6 Z" fill="#1f2c3a"/></g><g transform="translate(652,650.6)"><rect x="0.5" y="0.50" width="11.4" height="3.2" fill="#fff" stroke="#8a8a8a" stroke-width="0.9"/><rect x="0.5" y="6.15" width="11.4" height="3.2" fill="#f6cb00" stroke="#8a8a8a" stroke-width="0.9"/><rect x="0.5" y="11.80" width="11.4" height="3.2" fill="#fff" stroke="#8a8a8a" stroke-width="0.9"/><path d="M14,7.7 H19.4 M16.7,5 V10.4" stroke="#1a9a1a" stroke-width="1.6" fill="none"/></g><g transform="translate(680,650.6)"><rect x="0.5" y="0.50" width="11.4" height="3.2" fill="#fff" stroke="#8a8a8a" stroke-width="0.9"/><rect x="0.5" y="6.15" width="11.4" height="3.2" fill="#f6cb00" stroke="#8a8a8a" stroke-width="0.9"/><rect x="0.5" y="11.80" width="11.4" height="3.2" fill="#fff" stroke="#8a8a8a" stroke-width="0.9"/><path d="M14.3,5.4 L19,10.1 M19,5.4 L14.3,10.1" stroke="#b4161b" stroke-width="1.6" fill="none"/></g><g transform="translate(708.2,650.6)" opacity="0.38"><rect x="0.5" y="0.50" width="11.4" height="3.2" fill="#fff" stroke="#8a8a8a" stroke-width="0.9"/><rect x="0.5" y="6.15" width="11.4" height="3.2" fill="#fff" stroke="#8a8a8a" stroke-width="0.9"/><rect x="0.5" y="11.80" width="11.4" height="3.2" fill="#f6cb00" stroke="#8a8a8a" stroke-width="0.9"/><path d="M13.4,16.2 L16.5,10.2 L19.6,16.2 L16.5,14.2 Z" fill="#444"/></g><g transform="translate(736.1,650.6)"><rect x="0.5" y="0.50" width="11.4" height="3.2" fill="#f6cb00" stroke="#8a8a8a" stroke-width="0.9"/><rect x="0.5" y="6.15" width="11.4" height="3.2" fill="#fff" stroke="#8a8a8a" stroke-width="0.9"/><rect x="0.5" y="11.80" width="11.4" height="3.2" fill="#fff" stroke="#8a8a8a" stroke-width="0.9"/><path d="M13.4,-1.4 L16.5,4.6 L19.6,-1.4 L16.5,0.6 Z" fill="#1f2c3a"/></g><g><path d="M1110.3,317.4 V335.4 H1129.6 Z" fill="#fafafa" stroke="#8a8a8a" stroke-width="0.9"/><path d="M1114.2,327 V332 H1119.6 Z" fill="none" stroke="#8a8a8a" stroke-width="0.8"/><rect x="1118.2" y="319.2" width="11.8" height="10.6" fill="#cfe0ee" stroke="#4a7fb0" stroke-width="0.9"/><rect x="1118.2" y="319.2" width="11.8" height="2.4" fill="#4a7fb0"/><path d="M1122.1,321.6 V329.8 M1126.1,321.6 V329.8 M1118.2,324.4 H1130 M1118.2,327.1 H1130" stroke="#fff" stroke-width="0.7"/><path d="M1110.3,317.4 L1129.6,335.4" stroke="#8a8a8a" stroke-width="0.9"/><path d="M1132,325 L1134.3,327.6 L1136.6,325" stroke="#111" stroke-width="1.2" fill="none"/><rect x="1148.2" y="316.3" width="4" height="3.7" fill="#2c3b4b"/><rect x="1148.2" y="321.7" width="4" height="3.7" fill="#3478ab"/><rect x="1148.2" y="327.0" width="4" height="3.7" fill="#3478ab"/><rect x="1148.2" y="332.4" width="4" height="3.7" fill="#3478ab"/><rect x="1153.8" y="316.3" width="4" height="3.7" fill="#2c3b4b"/><rect x="1153.8" y="321.7" width="4" height="3.7" fill="#3478ab"/><rect x="1153.8" y="327.0" width="4" height="3.7" fill="#3478ab"/><rect x="1153.8" y="332.4" width="4" height="3.7" fill="#3478ab"/></g></svg>
<div class="abs" style="left:650.2px;top:337.2px;width:520px;height:247.6px;border:1px solid #858585;background:#fff"></div>
<div class="abs" style="left:651.2px;top:338.2px;width:520px;height:26.4px;background:#6190ad;border-bottom:1px solid #47748f"></div>
<div class="abs" style="left:670.3px;top:338.2px;width:1px;height:26.4px;background:#3f6a86"></div>
<div class="abs" style="left:919.3px;top:338.2px;width:1px;height:26.4px;background:#3f6a86"></div>
<div class="t" style="left:676.2px;top:346.2px;font-size:12px;color:#fff">Record</div>
<div class="t" style="left:925.3px;top:346.2px;font-size:12px;color:#fff">Path</div>
<div class="abs" style="left:651.2px;top:364.6px;width:520px;height:50px;background:#fafafa;border-bottom:1px solid #d2d2d2"></div>
<div class="abs" style="left:652.2px;top:366.4px;width:520px;height:21.6px;background:#eff4fd;border:1px solid #c3c3c3"></div>
<div class="abs" style="left:670.3px;top:364.6px;width:1px;height:50px;background:#c6c6c6"></div>
<div class="abs" style="left:919.3px;top:364.6px;width:1px;height:50px;background:#c6c6c6"></div>
<div class="t" style="left:676.2px;top:372.2px;font-size:12px;color:#111">root</div>
<div class="t" style="left:925.6px;top:372.2px;font-size:12px;color:#111">/</div>
<div class="abs" style="left:650.2px;top:669.3px;width:520px;height:131.4px;border:1px solid #858585;border-bottom:none;background:#fff"></div>
<div class="abs" style="left:651.2px;top:670.3px;width:501.0px;height:26.4px;background:#6190ad;border-bottom:1px solid #47748f"></div>
<div class="abs" style="left:670.3px;top:670.3px;width:1px;height:26.4px;background:#3f6a86"></div>
<div class="abs" style="left:670.3px;top:696.7px;width:1px;height:104px;background:#c6c6c6"></div>
<div class="abs" style="left:829.8px;top:670.3px;width:1px;height:26.4px;background:#3f6a86"></div>
<div class="abs" style="left:829.8px;top:696.7px;width:1px;height:104px;background:#c6c6c6"></div>
<div class="abs" style="left:990.6px;top:670.3px;width:1px;height:26.4px;background:#3f6a86"></div>
<div class="abs" style="left:990.6px;top:696.7px;width:1px;height:104px;background:#c6c6c6"></div>
<div class="t" style="left:676.2px;top:678.3px;font-size:12px;color:#fff">Path</div>
<div class="t" style="left:836.1px;top:678.3px;font-size:12px;color:#fff">Field</div>
<div class="t" style="left:996.5px;top:678.3px;font-size:12px;color:#fff">Type</div>
<div class="abs" style="left:651.2px;top:696.7px;width:500.1px;height:49.5px;background:#fafafa"></div>
<div class="abs" style="left:652.2px;top:698.2px;width:498.0px;height:21.8px;background:#eff4fd;border:1px solid #c3c3c3"></div>
<div class="abs" style="left:651.2px;top:720.8px;width:500.1px;height:1px;background:#d6d6d6"></div>
<div class="abs" style="left:651.2px;top:745.8px;width:500.1px;height:1px;background:#d6d6d6"></div>
<div class="abs" style="left:651.2px;top:770.9px;width:500.1px;height:1px;background:#d6d6d6"></div>
<div class="abs" style="left:651.2px;top:796.0px;width:500.1px;height:1px;background:#d6d6d6"></div>
<div class="abs" style="left:670.3px;top:696.7px;width:1px;height:104px;background:#c6c6c6"></div>
<div class="abs" style="left:829.8px;top:696.7px;width:1px;height:104px;background:#c6c6c6"></div>
<div class="abs" style="left:990.6px;top:696.7px;width:1px;height:104px;background:#c6c6c6"></div>
<div class="t" style="left:676.2px;top:704.1px;font-size:12px;color:#111">#</div>
<div class="t" style="left:836.1px;top:704.1px;font-size:12px;color:#111">root_ID</div>
<div class="t" style="left:996.5px;top:704.1px;font-size:12px;color:#111">Integer (4)</div>
<div class="t" style="left:676.2px;top:729.4px;font-size:12px;color:#111">email</div>
<div class="t" style="left:836.1px;top:729.4px;font-size:12px;color:#111">EmailAddress</div>
<div class="t" style="left:996.5px;top:729.4px;font-size:12px;color:#111">Unicode (32)</div>
<div class="t" style="left:996.5px;top:754.3px;font-size:12px;color:#111">Unicode (64)</div>
<div class="t" style="left:996.5px;top:779.4px;font-size:12px;color:#111">Unicode (64)</div>
<div class="abs" style="left:1151.3px;top:687px;width:6px;height:113.7px;background:#c9c9c9"></div>
<div class="abs" style="left:642.8px;top:800.7px;width:514.2px;height:6.3px;background:#f2f2f2"></div>
</body></html>
